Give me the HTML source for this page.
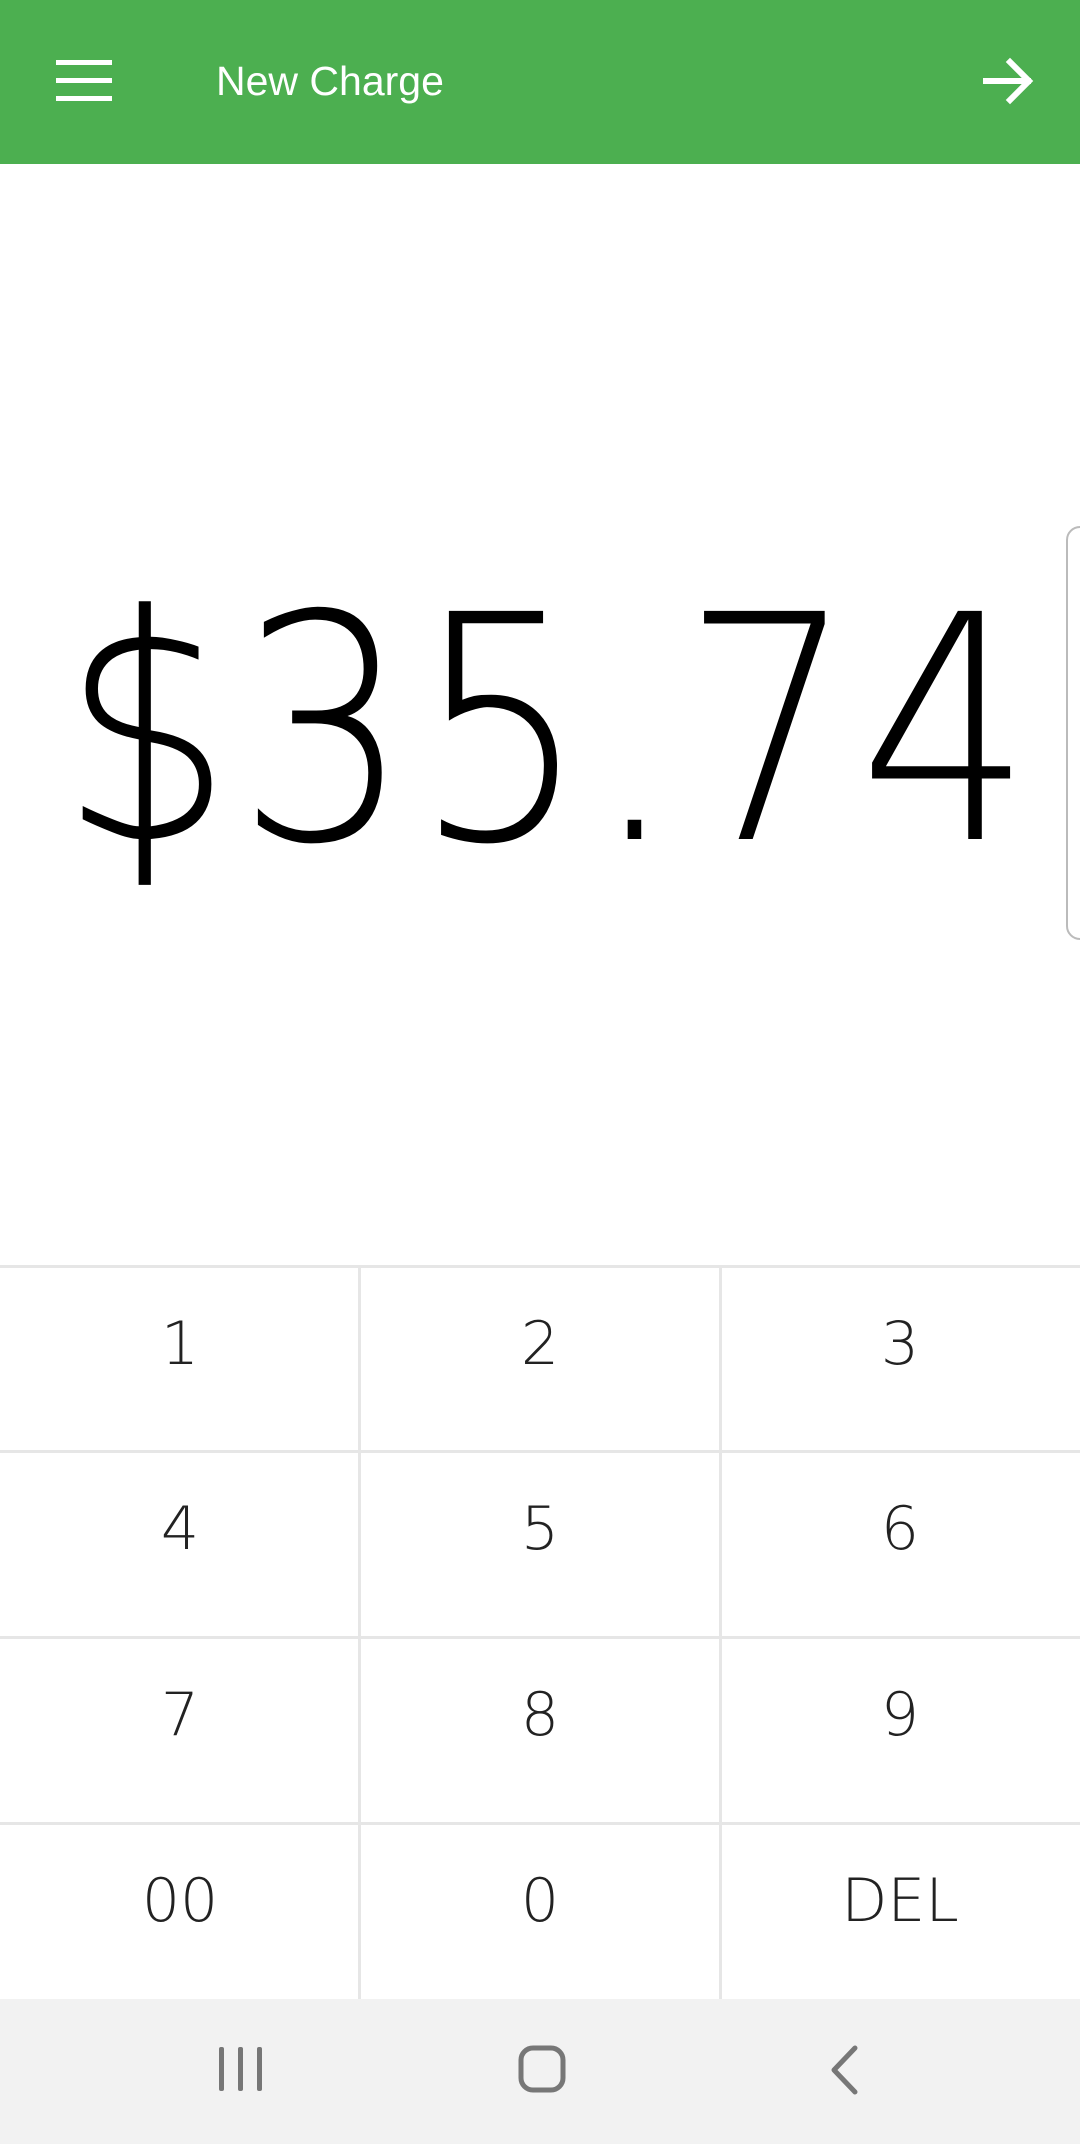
<!DOCTYPE html>
<html><head><meta charset="utf-8"><style>
body{margin:0;width:1080px;height:2144px;position:relative;background:#fff;font-family:"Liberation Sans",sans-serif;overflow:hidden}
.hdr{position:absolute;left:0;top:0;width:1080px;height:164px;background:#4caf50}
.title{position:absolute;left:216px;top:56px;color:#fff;font-size:41px;line-height:50px}
.amt{position:absolute;left:8px;width:1080px;top:542px;text-align:center;font-family:"DejaVu Sans ExtraLight","DejaVu Sans",sans-serif;font-weight:200;font-size:272px;line-height:380px;color:#000;transform:scaleY(1.15);transform-origin:50% 50%;letter-spacing:4px}
.bump{position:absolute;left:1066px;top:526px;width:40px;height:414px;border:2px solid #bbb;border-radius:14px;box-sizing:border-box}
.hl{position:absolute;left:0;width:1080px;height:3px;background:#e6e6e6}
.vl{position:absolute;top:1266px;height:733px;width:3px;background:#e6e6e6}
.k{position:absolute;width:360px;height:186px;display:flex;align-items:center;justify-content:center;font-family:"DejaVu Sans ExtraLight","DejaVu Sans",sans-serif;font-weight:200;font-size:60px;color:#222;padding-bottom:34px;box-sizing:border-box}
.nav{position:absolute;left:0;top:1999px;width:1080px;height:145px;background:#f2f2f2}
</style></head><body>
<div class="hdr">
<svg style="position:absolute;left:56px;top:58px" width="56" height="44"><g fill="#fff"><rect x="0" y="2" width="56" height="5"/><rect x="0" y="20" width="56" height="5"/><rect x="0" y="38" width="56" height="5"/></g></svg>
<div class="title">New Charge</div>
<svg style="position:absolute;left:980px;top:56px" width="56" height="52"><g fill="none" stroke="#fff" stroke-width="6" stroke-linecap="square"><path d="M6 25 H48 M30 6 L49 25 L30 44"/></g></svg>
</div>
<div class="amt">$35.74</div>
<div class="bump"></div>
<div class="hl" style="top:1265px"></div>
<div class="hl" style="top:1450px"></div>
<div class="hl" style="top:1636px"></div>
<div class="hl" style="top:1822px"></div>
<div class="vl" style="left:358px"></div>
<div class="vl" style="left:719px"></div>
<div class="k" style="left:0;top:1268px">1</div><div class="k" style="left:360px;top:1268px">2</div><div class="k" style="left:720px;top:1268px">3</div>
<div class="k" style="left:0;top:1453px">4</div><div class="k" style="left:360px;top:1453px">5</div><div class="k" style="left:720px;top:1453px">6</div>
<div class="k" style="left:0;top:1639px">7</div><div class="k" style="left:360px;top:1639px">8</div><div class="k" style="left:720px;top:1639px">9</div>
<div class="k" style="left:0;top:1825px">00</div><div class="k" style="left:360px;top:1825px">0</div><div class="k" style="left:720px;top:1825px">DEL</div>
<div class="nav">
<svg style="position:absolute;left:218px;top:46px" width="46" height="48"><g fill="#777"><rect x="1" y="2" width="5" height="44" rx="2"/><rect x="20" y="2" width="5" height="44" rx="2"/><rect x="39" y="2" width="5" height="44" rx="2"/></g></svg>
<svg style="position:absolute;left:518px;top:46px" width="48" height="48"><rect x="3" y="3" width="42" height="42" rx="12" fill="none" stroke="#777" stroke-width="5"/></svg>
<svg style="position:absolute;left:828px;top:46px" width="34" height="50"><path d="M27 3 L6 25 L27 47" fill="none" stroke="#777" stroke-width="5" stroke-linecap="round" stroke-linejoin="round"/></svg>
</div>
</body></html>
